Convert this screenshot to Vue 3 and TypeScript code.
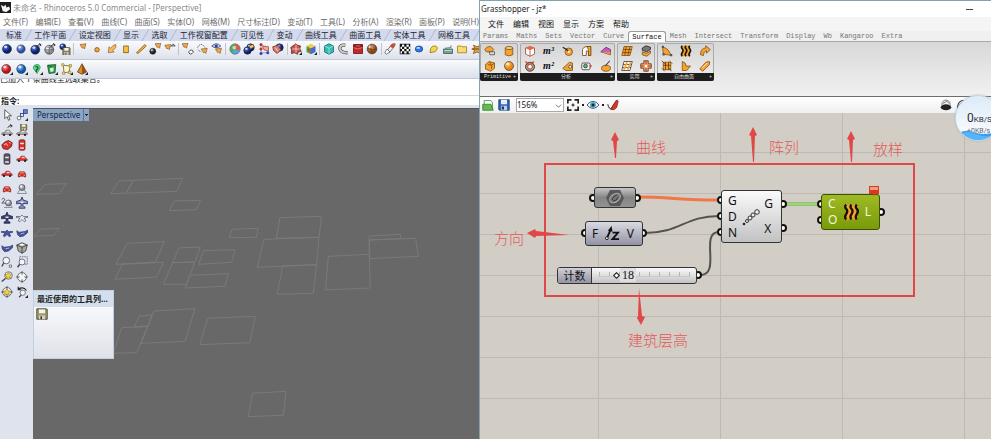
<script setup lang="ts">
import { ref } from 'vue'

const menus = ['文件(F)', '编辑(E)', '查看(V)', '曲线(C)', '曲面(S)', '实体(O)', '网格(M)', '尺寸标注(D)', '变动(T)', '工具(L)', '分析(A)', '渲染(R)', '面板(P)', '说明(H)']
const tabs = ['标准', '工作平面', '设定视图', '显示', '选取', '工作视窗配置', '可见性', '变动', '曲线工具', '曲面工具', '实体工具', '网格工具']
const ghMenus = ['文件', '编辑', '视图', '显示', '方案', '帮助']
const ghTabs = ['Params', 'Maths', 'Sets', 'Vector', 'Curve', 'Surface', 'Mesh', 'Intersect', 'Transform', 'Display', 'Wb', 'Kangaroo', 'Extra']

const ball = (fill: string, x = 8, y = 8, r = 6) =>
  `<circle cx="${x}" cy="${y}" r="${r}" fill="${fill}" stroke="#1b2038" stroke-width=".7"/><ellipse cx="${x - r * 0.3}" cy="${y - r * 0.45}" rx="${r * 0.35}" ry="${r * 0.25}" fill="#fff" opacity=".75"/>`
const pointer = (x: number, y: number) =>
  `<path transform="translate(${x} ${y})" d="M0 1l8-1-2 7-2-2-1 1z" fill="#f4a640" stroke="#6a4312" stroke-width=".7"/>`
const hook = '<path d="M9 5q1-3 5-3m-2-1.500l3 2-2 2" fill="none" stroke="#222" stroke-width="1.200"/>'
const corner = '<path d="M16 12v4h-4z" fill="#222"/>'
const floppy = (x: number, y: number, s: number, c = '#8b8656') =>
  `<g transform="translate(${x} ${y}) scale(${s})"><path d="M0 0h13l1 1v13H0z" fill="${c}" stroke="#34332a"/><path d="M3 1h8v5H3z" fill="#f4f4ee"/><path d="M3 9h8v5H3z" fill="#d2d2ca"/><path d="M5 10h2v4H5z" fill="#333"/></g>`
const carSide = (c: string, y = 0) =>
  `<g transform="translate(0 ${y})"><path d="M1 10V8l4-1 2-3h4l2 3 2 1v2z" fill="${c}" stroke="#701010" stroke-width=".5"/><path d="M7 7l1-2h3l1 2z" fill="#dde"/><circle cx="4" cy="10.500" r="1.500" fill="#222"/><circle cx="12" cy="10.500" r="1.500" fill="#222"/></g>`
const carFront = '<path d="M3 12V8l2-3h6l2 3v4h-2v-1H5v1z" fill="#d92b22" stroke="#5a1010" stroke-width=".6"/><path d="M5 7l1-1h4l1 1z" fill="#f7dcdc"/><path d="M4 9h2v1H4zm6 0h2v1h-2z" fill="#ffe36b"/>'
const carTop = (c: string) =>
  `<rect x="4" y="1" width="8" height="14" rx="2" fill="${c}" stroke="#401012" stroke-width=".8"/><path d="M5 5h6l-1 2H6zm1 6h4l1 2H5z" fill="#e9e9f2"/>`
const lens = '<circle cx="7" cy="6" r="4.500" fill="#f4f6fa" stroke="#555" stroke-width="1.100"/><path d="M4 9l-3 5" stroke="#444" stroke-width="1.800"/>'
const spark = (x: number, y: number) => `<path transform="translate(${x} ${y})" d="M0-4l1.500 2L4-1 2 1l1 3-3-1-3 1V1l-2-2 3-.5z" fill="#f6d32e" stroke="#6d5a10" stroke-width=".6"/>`
const target = '<circle cx="8" cy="8" r="6" fill="#f2f4f8" stroke="#555" stroke-width="1.100"/><path d="M8 0v5m0 6v5M0 8h5m6 0h5" stroke="#444"/>'
const planeThin = (c: string) => `<path d="M0 6h6l2-2 2 2h6v1l-5 1 2 4-2 1-3-3-3 3-2-1 2-4-5-1z" fill="${c}" stroke="#222846" stroke-width=".7"/>`
const planeSide = '<path d="M1 5l3 2 8-1 4-2-1 4-5 4-5 1-3-3z" fill="#4254a8" stroke="#20284f" stroke-width=".8"/><path d="M6 9l5-1" stroke="#cdd4f4"/>'
const planeTop = '<path d="M8 0l1.500 4 6 2v3l-6-.5-.5 3 3 2v1.500H4V13.500l3-2-.5-3-6 .5V6l6-2z" fill="#8d99cc" stroke="#1b2245"/><path d="M6 6h4v2H6z" fill="#e4e8f8"/>'
const O = 'fill="#f5a32c" stroke="#6b3d0a" stroke-width=".9"'

const icons: Record<string, string> = {
  blue: ball('url(#blue)'),
  blue2: ball('url(#blueSoft)', 8, 8, 5.5),
  blueHook: ball('url(#blue)', 7, 9, 6) + hook,
  grayHook: ball('url(#gray)', 7, 9, 6) + '<path d="M1 9h12M7 3v12M3 5q4 3 8 0" stroke="#444" stroke-width=".7" fill="none"/>' + hook,
  ballSave: ball('url(#blue)', 5, 5, 4) + floppy(5, 6, 0.7),
  arrow: pointer(4, 1),
  dot: `<circle cx="8" cy="9" r="3" ${O}/>`,
  arrowIn: '<path d="M13 2l-3 1-4 4-2-2-1 8 8-1-2-2 4-4z" fill="#f5b95e" stroke="#6b3d0a" stroke-width=".7"/>',
  bar: '<rect x="5" y="4" width="6" height="9" fill="#fbc43e" stroke="#6b3d0a" stroke-width=".9"/>',
  pencil: '<path d="M2 13L13 2l2 2L4 14z" fill="#f9b43a" stroke="#6b3d0a" stroke-width=".9"/>',
  bombArrow: ball('url(#dark)', 5, 11, 4) + pointer(8, 0),
  arrowHook: pointer(1, 2) + '<path d="M9 5q1-3 4-3m-1-1l3 3h-5" fill="#ccc" stroke="#444"/>',
  arrowRing: pointer(0, 0) + '<ellipse cx="12" cy="12" rx="3" ry="2.500" fill="#fff" stroke="#333" transform="rotate(-30 12 12)"/>',
  arrowDash: '<path d="M2 6q5-8 10 0M3 9l3 3" stroke="#333" fill="none" stroke-dasharray="2 1"/>' + pointer(7, 7),
  eyeArrow: '<path d="M1 4q6-6 12 0-6 5-12 0" fill="#ccd3ef" stroke="#333a60"/><circle cx="7" cy="4" r="2" fill="#223c9c"/>' + pointer(6, 7),
  rgb: '<circle cx="8" cy="8" r="7" fill="#5aa3d8" stroke="#444" stroke-width=".6"/><path d="M8 1a7 7 0 0 0-4 12l4-5z" fill="#4cb04a"/><path d="M8 1a7 7 0 0 1 6 9L8 8z" fill="#e5593a"/><circle cx="7" cy="6" r="2.500" fill="#fff" opacity=".6"/>',
  ballOrange: ball('url(#blue)', 10, 6, 5) + ball('url(#blue)', 6, 10, 5) + '<path d="M8 4l5-2 2 3-5 3z" fill="#f5c95e" stroke="#6b3d0a" stroke-width=".7"/>',
  redDots: '<path d="M4 2v11M4 3l8 3M4 13h9" stroke="#8888aa"/><path d="M6 4l8 1v6l-6-2z" fill="#f0a9a0" stroke="#b03b30"/><g fill="#c22b2b"><circle cx="4" cy="2" r="2"/><circle cx="4" cy="8" r="2"/></g><g fill="#2845bb"><circle cx="4" cy="14" r="2"/><circle cx="13" cy="13" r="2"/></g>',
  redBlue: ball('url(#blue)', 10, 6, 5) + '<path d="M1 5l7-2 4 6-5 5-5-4z" fill="#d97b64" stroke="#5f2a26"/><path d="M4 6l4 5" stroke="#fff"/>',
  gear: '<path d="M5 3l3-2 2 2 4 1-1 4 2 3-4 1-1 3-4-2-4 1V9L1 6z" fill="#cf5145" stroke="#57201c"/><path d="M3 8h10M8 2v11" stroke="#e7e7e7"/>' + corner,
  cube: '<path d="M2 4l6-3 6 3-6 3z" fill="#f4cf39"/><path d="M2 4v8l6 3V7z" fill="#44a34a"/><path d="M14 4v8l-6 3V7z" fill="#4768d8"/><path d="M4 7l3 1v4l-3-2z" fill="#d94332"/>' + corner,
  gem: '<path d="M8 1l6 3v8l-6 3-6-3V4z" fill="#35bcb4" stroke="#125e60"/><path d="M2 4l6 3 6-3M8 7v8" stroke="#9ceee6" fill="none"/>',
  pipe: '<path d="M11 3Q3 2 4 8q1 5 10 5" fill="none" stroke="#444" stroke-width="4.500"/><path d="M11 3Q3 2 4 8q1 5 10 5" fill="none" stroke="#c9c9c9" stroke-width="2.800"/>',
  redBox: '<path d="M2 2h12v12H2z" fill="#c32824" stroke="#5f0d0d"/><path d="M2 2h12v4H2z" fill="#8f1715"/><path d="M5 4h6M2 6l5 2 7-2" stroke="#f48b83" fill="none"/>',
  brown: ball('url(#brown)', 8, 8, 6.5) + '<path d="M2 7q6 4 12 1M7 2q-2 6 2 12" stroke="#6b3310" fill="none"/>',
  rocket: '<path d="M5 9l5-7q4-2 5-1 0 3-3 6l-5 6z" fill="#eee" stroke="#555"/><path d="M8 5l3-4 4 1-3 5z" fill="#d8442f"/><path d="M4 8l-3 5 2 2 5-3z" fill="#fff" stroke="#555"/>',
  checker: '<path d="M1 1h14v14H1z" fill="#111"/><path d="M4 2h3v3H4zm6 0h3v3h-3zM2 5h2v3H2zm5 0h3v3H7zm6 0h2v3h-2zM4 8h3v3H4zm6 0h3v3h-3zM7 11h3v3H7zm-5 0h2v3H2zm11 0h2v3h-2z" fill="#fff"/>',
  disc: '<ellipse cx="8" cy="8" rx="5" ry="4" fill="#2a78e8" stroke="#174293"/><ellipse cx="7" cy="6.500" rx="2.500" ry="1.300" fill="#bfe0ff"/>',
  bulb: '<path d="M4 13l1-6q2-4 6-3t2 5-5 3z" fill="#f7d748" stroke="#8d6c13"/>',
  tray: '<path d="M2 8h12v6H2z" fill="#71a291" stroke="#315c50"/><path d="M4 7l8-1V3" fill="none" stroke="#555"/><path d="M3 10h10" stroke="#d2efe3"/>',
  folder: '<path d="M2 4h5l1 1h6v8H2z" fill="#f8dc70" stroke="#9a7418"/>',
  bug: `<path d="M3 3l2 3-4 2 4 2-2 4 5-2 5 2-2-4 4-2-4-2 2-3-5 2z" ${O}/><path d="M3 8h9" stroke="#222"/>`,
  redBall: ball('url(#red)', 7, 8, 6) + corner,
  blueBall: ball('url(#azure)', 7, 8, 6) + corner,
  greenBulb: '<path d="M3 7q0-5 5-5t4 5l-4 7z" fill="#58dd88" stroke="#2b8c50"/><path d="M6 5q4-1 3 3l-2 1v3" stroke="#124b2a" stroke-width="1.500" fill="none"/>' + corner,
  greenBox: '<path d="M2 3l11-1-1 11-8 1z" fill="#2e9e4d" stroke="#0f4f23"/><path d="M5 7l5-1v5l-4 1z" fill="#dff5df"/><path d="M3 3l4 2" stroke="#115227"/>' + corner,
  nodes: '<path d="M3 3l9 1-1 8-7 1z" fill="#fff5c5" stroke="#555"/><g fill="#ffe66a" stroke="#8d7415" stroke-width=".8"><path d="M1 1h3v3H1zM11 2h3v3h-3zM10 11h3v3h-3zM2 12h3v3H2z"/></g>' + corner,
  cone: '<path d="M8 1l6 11-6 3-6-3z" fill="#e08b2d" stroke="#613407"/><path d="M8 1v14l6-3z" fill="#9a5315"/>' + corner,
  cursor: '<path d="M5 1v12l3-3 2 5 2-1-2-5h4z" fill="#fff" stroke="#333"/>',
  link: '<path d="M4 12L12 4" stroke="#555" stroke-width="1.500"/><circle cx="4" cy="12" r="2.500" fill="#fff" stroke="#555"/><rect x="10" y="1" width="5" height="5" fill="#6683d8" stroke="#20357c"/><rect x="6" y="6" width="4" height="4" fill="#dfe7ff" stroke="#20357c"/>' + corner,
  carHook: carSide('#9fb09f', 4) + hook,
  carSave: carSide('#9fb09f', 4) + floppy(6, 0, 0.6),
  redBlob: '<path d="M1 8l4-4 5-2 5 3-1 5-5 4-6-1z" fill="#d9302a" stroke="#5f1111"/><path d="M4 8l3-2 2 3m2-5l2 2" stroke="#fff" fill="none"/>',
  carTop: carTop('#e02d25'), carTopDark: carTop('#55566a'),
  car: carSide('#e02d25'), carFront,
  ballTri: ball('url(#gray)', 8, 6, 4) + '<path d="M2 14l3-5m9 5l-3-5M2 14h12" stroke="#777" fill="none"/>',
  ballTwo: '<path d="M1 3q3-3 4 0 0 2-4 5h5" fill="none" stroke="#333"/>' + ball('url(#gray)', 10, 8, 4) + '<path d="M4 14h11l-2-3" stroke="#777" fill="none"/>',
  planeTop, planeDark: planeTop.replace('#8d99cc', '#3b4276'),
  planeLine: planeThin('#e1e4f4'), planeFront: planeThin('#4254a8'), planeSide,
  crate: '<path d="M1 4l7-3 7 3-2 8-5 3-5-3z" fill="#a8a8a0" stroke="#2f2f2b"/><path d="M1 4l7 3 7-3M8 7v8" stroke="#2f2f2b" fill="none"/><path d="M4 4l4-2 4 2-4 1z" fill="#fff"/>',
  zoom: lens + '<path d="M11 12h3v3h-3z" fill="#fff" stroke="#555"/>',
  zoomDot: '<path d="M5 1h10v10H5z" fill="none" stroke="#555" stroke-dasharray="2 1"/><circle cx="8" cy="8" r="4" fill="#f4f6fa" stroke="#555"/><path d="M5 11l-3 4" stroke="#444" stroke-width="1.800"/>',
  zoomSpark: '<circle cx="10" cy="6" r="5" fill="#f4f6fa" stroke="#555"/><path d="M6 10l-5 4" stroke="#444" stroke-width="1.800"/>' + spark(10, 6),
  target, targetSpark: target + spark(8, 8),
  zoomUndo: '<path d="M14 6q-4-6-11-2m0-3v4h4" stroke="#222" fill="none" stroke-width="1.500"/><circle cx="9" cy="9" r="3.500" fill="#f4f6fa" stroke="#555"/><path d="M7 12l-3 3" stroke="#444" stroke-width="1.500"/>' + corner,
  save: floppy(1, 1, 1, '#a09a68'),
  gSurface: `<path d="M1 6q3-5 8-4l4 4-3 3H3z" ${O}/><path d="M7 9h7v4H8z" fill="#ddd" stroke="#444"/>`,
  gCyl: `<path d="M3 4v9q5 3 10 0V4z" ${O}/><ellipse cx="8" cy="4" rx="5" ry="2" fill="#ffd57e" stroke="#6b3d0a"/>`,
  gBox: `<path d="M2 6l5-4 7 2v7l-5 4-7-3z" ${O}/><path d="M5 6l5 1v5M7 2l3 5 4-3" fill="none" stroke="#7a4b10"/>`,
  gBall: ball('url(#orange)', 8, 8, 6),
  gCubeLine: '<path d="M2 4l6-2 6 2v8l-6 3-6-3z" fill="#fff" stroke="#a33b24"/><path d="M2 4l6 3 6-3-6-2z" fill="#e6683e"/><path d="M8 7v8" stroke="#a33b24"/>',
  gOrb: '<circle cx="8" cy="9" r="6" fill="#b98e78" stroke="#33241d"/><circle cx="8" cy="9" r="3" fill="#fff" stroke="#a33b24"/><path d="M2 2l4 4m7-4l-3 3" stroke="#c63a23" stroke-width="1.500"/>',
  gKnot: `<circle cx="9" cy="9" r="5" ${O}/><path d="M1 3l5 3 3 3" stroke="#222" stroke-width="1.500" fill="none"/><circle cx="9" cy="9" r="1.500" fill="#fff"/>`,
  gTilt: `<path d="M1 11l9-8 4 1v10H5z" ${O}/><circle cx="11" cy="9" r="2" fill="#fff" stroke="#333"/>`,
  gFold: `<path d="M2 14V6q1-4 6-4h5v12h-3V8H7v6z" fill="#fff" stroke="#6b3d0a"/><path d="M8 2h5v12h-3V7z" ${O}/>`,
  gTag: '<rect x="1" y="4" width="11" height="9" rx="2" fill="#eee" stroke="#333"/><circle cx="6" cy="8" r="2.500" fill="#6db25a" stroke="#333"/><path d="M12 6l3 2-3 2z" fill="#d33"/>',
  gMag: '<path d="M1 9l7-6 6 3v7z" fill="#c659c0" stroke="#56286a"/><path d="M1 9l13 4V9z" fill="#f48b36"/>',
  gPot: `<ellipse cx="8" cy="11" rx="6" ry="4" ${O}/><path d="M7 8l6-7" stroke="#444" stroke-width="1.500"/>`,
  gGrid: `<path d="M4 2h11l-3 12H1z" ${O}/><path d="M7 2L5 14M12 2L9 14M3 6h11M2 10h11" stroke="#6b3d0a" fill="none"/>`,
  gGrid2: '<path d="M4 2h11l-3 12H1z" fill="#fff" stroke="#333"/><path d="M3 6h11M2 10h11" stroke="#333"/><path d="M4 13L8 3M9 13l4-10" stroke="#f5a32c" stroke-width="2.500"/>',
  gStack: `<path d="M3 4l5-3 6 2v3l-5 3-6-2z" fill="#777" stroke="#222"/><path d="M3 9l6 2 5-3v3l-5 4-6-2z" ${O}/>`,
  gCross: '<path d="M5 1h6v4h4v6h-4v4H5v-4H1V5h4z" fill="#f0a467" stroke="#632b13"/><path d="M8 1v14M1 8h14" stroke="#8a2f14"/><circle cx="8" cy="8" r="2" fill="#fff"/>',
  gTri: `<path d="M2 2l7 4 5 8-11-2z" ${O}/><path d="M1 1h3v3H1zm11 11h3v3h-3zM2 11h3v3H2z" fill="#555"/>`,
  loft: '<path d="M3 1q-2 2 0 4t0 5 0 5h10q2-2 0-5t0-5 0-4z" fill="#f5a32c"/><path d="M3 1q-2 2 0 4t0 5 0 5M8 1q-2 2 0 4t0 5 0 5M13 1q-2 2 0 4t0 5 0 5" fill="none" stroke="#17120a" stroke-width="2.200"/>',
  gBend: `<path d="M2 13q0-9 7-9V1l6 5-5 5V8q-4 0-4 6z" ${O}/>`,
  gPatch: `<path d="M3 3h10v10H3z" ${O}/><path d="M1 1l4 4m6-4l4 4M1 11l4 4m6-4l3 4M6 3v10M10 3v10M3 7h10" stroke="#553009"/>`,
  gSheet: `<path d="M3 2q5 1 5 6h6l-5 6H3z" ${O}/>`,
  gPipe: `<path d="M1 12L9 3l5-1v4l-9 9z" ${O}/><path d="M4 11l7-7" stroke="#fff"/>`,
  open: '<path d="M3 2h9l2 3v8H3z" fill="#fff" stroke="#3c8a35"/><path d="M1 7h11l3 8H1z" fill="#61bb4e" stroke="#2c7a28"/>',
  ghSave: '<path d="M1 1h14v14H2l-1-1z" fill="#2f65b8" stroke="#173866"/><path d="M4 1h8v6H4z" fill="#e6effb"/><path d="M4 9h8v6H4z" fill="#b8cce8"/><path d="M5 10h3v4H5z" fill="#173866"/>',
  frame: '<path d="M1 6V1h5M10 1h5v5M15 10v5h-5M6 15H1v-5" fill="none" stroke="#222" stroke-width="2.500"/><path d="M8 6v4M6 8h4" stroke="#222" stroke-width="1.500"/>',
  eye: '<path d="M0 8q8-10 16 0-8 9-16 0z" fill="#fff" stroke="#224d66" stroke-width="1.200"/><circle cx="8" cy="8" r="4" fill="#57a5c6"/><circle cx="8" cy="8" r="2" fill="#102d40"/>',
  paint: '<path d="M1 7q2 8 5 5L14 1" fill="none" stroke="#222" stroke-width="1.300"/><path d="M5 14q5 2 8-3l2-8-3-1-5 8z" fill="#d43a2a" stroke="#6b140c" stroke-width=".8"/>',
  globe: '<circle cx="8" cy="7" r="5.500" fill="#f4f4f4" stroke="#555"/><path d="M4 6l5-3 3 3" stroke="#555" fill="none"/><ellipse cx="8" cy="11" rx="7" ry="4" fill="#222"/>',
  globeHalf: '<path d="M2 13q0-9 6-11l5 1" fill="#f4f4f4" stroke="#333" stroke-width="1.500"/><path d="M3 9l5-5m0 5l3-5" stroke="#555"/>'
}

const mainBar = [
  ['blue', 'blue2', 'blueHook', 'grayHook', 'ballSave'],
  ['arrow', 'dot', 'arrowIn', 'bar', 'pencil', 'bombArrow', 'arrowHook'],
  ['arrowRing', 'arrowDash', 'eyeArrow'],
  ['rgb', 'ballOrange', 'redDots', 'redBlue'],
  ['gear', 'cube'],
  ['gem', 'pipe', 'redBox', 'brown'],
  ['rocket', 'checker', 'disc', 'bulb', 'tray', 'folder', 'bug']
]
const secondBar = ['redBall', 'blueBall', 'greenBulb', 'greenBox', 'nodes', 'cone']
const sideBar = ['cursor', 'link', 'carHook', 'carSave', 'redBlob', 'carTop', 'carTopDark', 'car', 'car', 'carFront', 'carFront', 'ballTri', 'ballTwo', 'planeTop', 'planeDark', 'planeLine', 'planeFront', 'planeSide', 'planeSide', 'crate', 'zoom', 'zoomDot', 'zoomSpark', 'target', 'targetSpark', 'zoomUndo']
const panels = [
  { name: 'Primitive', cols: 2, items: ['gSurface', 'gCyl', 'gBox', 'gBall'] },
  { name: '分析', cols: 5, items: ['gCubeLine', 'm³', 'gKnot', 'gFold', 'gMag', 'gOrb', 'm²', 'gTilt', 'gTag', 'gPot'] },
  { name: '实用', cols: 2, items: ['gGrid', 'gStack', 'gGrid2', 'gCross'] },
  { name: '自由曲面', cols: 3, items: ['gTri', 'loft', 'gBend', 'gPatch', 'gSheet', 'gPipe'] }
]

/* Building outlines in the perspective view, at three units per pixel. */
const outlines = [
  '20,100 45,70 109,68 88,98', '242,98 267,60 458,52 440,91', '310,60 288,96', '418,149 432,120 512,118 499,146',
  '12,226 30,205 88,202 72,223', '598,230 606,205 684,202 680,229', '258,310 292,247 403,242 376,303',
  '255,355 277,310 401,304 380,348', '400,370 447,261 511,258 470,370', '427,305 492,303',
  '506,310 520,269 615,266 605,304', '465,381 480,343 596,338 585,376', '313,497 328,465 366,462 353,495',
  '333,547 372,450 495,443 465,541', '250,577 275,500 353,497 320,575', '510,551 533,472 676,466 660,545',
  '739,232 750,170 875,166 867,229', '682,319 702,235 867,229 860,311', '742,400 758,315 860,311 850,397',
  '887,387 895,286 1018,280 1021,381', '1018,225 1112,220 1112,233 1018,237', '1018,237 1157,232 1165,286 1020,293',
  '1018,237 1018,280', '655,767 668,697 768,691 760,763'
]
const ports = [[113, 85], [157, 85], [105, 120], [163, 120], [218, 162], [241, 87], [241, 103], [241, 119], [303, 91], [303, 115], [341, 91], [341, 107], [401, 99]]

const activeTab = ref('Surface')
const zoomLevel = ref('156%')
const count = ref(18)
</script>

<template>
  <svg class="defs" aria-hidden="true">
    <defs>
      <radialGradient id="blue" cx=".35" cy=".3"><stop offset="0" stop-color="#7fa8f5" /><stop offset=".5" stop-color="#2a4fb4" /><stop offset="1" stop-color="#101f63" /></radialGradient>
      <radialGradient id="blueSoft" cx=".35" cy=".3"><stop offset="0" stop-color="#a8c3fa" /><stop offset="1" stop-color="#2c4fb0" /></radialGradient>
      <radialGradient id="azure" cx=".35" cy=".3"><stop offset="0" stop-color="#a5d6ff" /><stop offset="1" stop-color="#0e55ad" /></radialGradient>
      <radialGradient id="red" cx=".35" cy=".3"><stop offset="0" stop-color="#ff9a94" /><stop offset="1" stop-color="#c20f14" /></radialGradient>
      <radialGradient id="gray" cx=".35" cy=".3"><stop offset="0" stop-color="#ffffff" /><stop offset="1" stop-color="#8d8d8d" /></radialGradient>
      <radialGradient id="dark" cx=".35" cy=".3"><stop offset="0" stop-color="#888888" /><stop offset="1" stop-color="#1c1c1c" /></radialGradient>
      <radialGradient id="brown" cx=".35" cy=".3"><stop offset="0" stop-color="#efae6c" /><stop offset="1" stop-color="#8c4a1a" /></radialGradient>
      <radialGradient id="orange" cx=".35" cy=".3"><stop offset="0" stop-color="#ffd071" /><stop offset="1" stop-color="#e88410" /></radialGradient>
    </defs>
  </svg>
  <main class="desktop">
    <section class="rhino">
      <header class="title">
        <svg class="logo" viewBox="0 0 12 12"><path d="M0 0h12v12H0z" fill="#1d1d1d" /><path d="M1 3l3 2 2-2 1 3 3-1 1 3-4 3-4-1z" fill="#f4f4f4" /></svg>
        <span>未命名 - Rhinoceros 5.0 Commercial - [Perspective]</span>
      </header>
      <nav class="menu"><a v-for="m in menus" :key="m" href="#">{{ m }}</a></nav>
      <nav class="tabs"><button v-for="t in tabs" :key="t">{{ t }}</button></nav>
      <div class="bar main-bar">
        <template v-for="(group, g) in mainBar" :key="g">
          <i v-if="g" class="sep"></i>
          <button v-for="name in group" :key="name" class="tool" :aria-label="name"><svg viewBox="0 0 16 16" v-html="icons[name]"></svg></button>
        </template>
      </div>
      <div class="bar second-bar">
        <button v-for="name in secondBar" :key="name" class="tool" :aria-label="name"><svg viewBox="0 0 16 16" v-html="icons[name]"></svg></button>
      </div>
      <div class="history"><p>已加入 1 条曲线至选取集合。</p></div>
      <div class="command"><label for="cmd">指令:</label><input id="cmd" type="text" /></div>
      <div class="work">
        <aside class="side">
          <button v-for="(name, i) in sideBar" :key="i" class="tool" :aria-label="name"><svg viewBox="0 0 16 16" v-html="icons[name]"></svg></button>
        </aside>
        <div class="view">
          <svg class="outlines" aria-hidden="true">
            <g transform="translate(-3 52) scale(.3333)"><polygon v-for="p in outlines" :key="p" :points="p" /></g>
          </svg>
          <button class="view-name"><span>Perspective</span><i></i></button>
          <div class="recent">
            <h2>最近使用的工具列...</h2>
            <button class="tool" aria-label="save"><svg viewBox="0 0 16 16" v-html="icons.save"></svg></button>
          </div>
        </div>
      </div>
    </section>

    <section class="gh">
      <header class="gh-title"><span>Grasshopper - jz*</span><button aria-label="minimize"></button></header>
      <nav class="gh-menu"><a v-for="m in ghMenus" :key="m" href="#">{{ m }}</a></nav>
      <nav class="gh-tabs"><button v-for="t in ghTabs" :key="t" :class="{ active: t === activeTab }" @click="activeTab = t">{{ t }}</button></nav>
      <div class="ribbon">
        <div v-for="p in panels" :key="p.name" class="panel">
          <div class="panel-grid" :style="{ '--cols': p.cols }">
            <button v-for="name in p.items" :key="name" class="comp" :aria-label="name">
              <svg v-if="icons[name]" viewBox="0 0 16 16" v-html="icons[name]"></svg>
              <b v-else>{{ name }}</b>
            </button>
          </div>
          <div class="panel-name"><span>{{ p.name }}</span><i>+</i></div>
        </div>
      </div>
      <div class="gh-bar">
        <button class="tool" aria-label="open"><svg viewBox="0 0 16 16" v-html="icons.open"></svg></button>
        <button class="tool" aria-label="save"><svg viewBox="0 0 16 16" v-html="icons.ghSave"></svg></button>
        <span class="combo">
          <select v-model="zoomLevel" aria-label="zoom"><option>156%</option><option>100%</option></select>
          <svg viewBox="0 0 8 8"><path d="M1 3l3 3 3-3" fill="none" stroke="#666" /></svg>
        </span>
        <button class="tool" aria-label="extents"><svg viewBox="0 0 16 16" v-html="icons.frame"></svg></button>
        <i class="drop"></i>
        <button class="tool" aria-label="preview"><svg viewBox="0 0 16 16" v-html="icons.eye"></svg></button>
        <i class="drop"></i>
        <button class="tool" aria-label="sketch"><svg viewBox="0 0 16 16" v-html="icons.paint"></svg></button>
        <span class="spring"></span>
        <button class="tool" aria-label="shaded"><svg viewBox="0 0 16 16" v-html="icons.globe"></svg></button>
        <button class="tool" aria-label="wire"><svg viewBox="0 0 16 16" v-html="icons.globeHalf"></svg></button>
      </div>
      <div class="canvas">
        <svg class="wires" aria-hidden="true">
          <g fill="none" stroke-width="2">
            <path d="M158 84C190 84 200 87 239 87" stroke="#f3764a" stroke-width="3" />
            <path d="M165 120C200 120 205 103 239 103" stroke="#55534f" />
            <path d="M220 162C242 162 219 119 239 119" stroke="#55534f" />
            <path d="M305 91H340" stroke="#8fc36c" stroke-width="4" />
            <path d="M305 91H340" stroke="#b5dc97" stroke-width="1" />
            <path d="M65 51H434V183H65z" stroke="#e04848" />
          </g>
          <g fill="#e04848">
            <path d="M135 19l4 8-2 1-1 17h-1l-2-17-2-1z" />
            <path d="M273 14l4 8-2 1-1 26h-1l-2-26-2-1z" />
            <path d="M371 18l4 8-2 1-1 22h-1l-2-22-2-1z" />
            <path d="M47 120l8-4 1 2 33 4-33 1-1 2z" />
            <path d="M161 212l-4-7 1-2 1-28 3 28 3 1z" />
          </g>
          <g fill="#fff" stroke="#111" stroke-width="2"><circle v-for="(p, i) in ports" :key="i" :cx="p[0]" :cy="p[1]" r="3" /></g>
        </svg>

        <span class="note n-curve">曲线</span>
        <span class="note n-array">阵列</span>
        <span class="note n-loft">放样</span>
        <span class="note n-dir">方向</span>
        <span class="note n-height">建筑层高</span>

        <div class="node curve">
          <svg viewBox="0 0 20 18"><path d="M5 1h10l4 8-4 8H5L1 9z" fill="#585858" /><ellipse cx="10" cy="9" rx="6" ry="4" transform="rotate(-35 10 9)" fill="#777" stroke="#aaa" /><path d="M7 11q1-4 5-5m-4 6q4 0 5-4" fill="none" stroke="#3d3d3d" /></svg>
        </div>
        <div class="node vector">
          <span>F</span>
          <svg viewBox="0 0 16 16"><path d="M2 13L6 4" stroke="#111" stroke-width="2" /><path d="M7 0L3 5l5 1z" fill="#111" /><circle cx="2" cy="13" r="1.500" fill="#fff" stroke="#111" /><path d="M8 7h6l-6 7h7" fill="none" stroke="#111" stroke-width="2" /></svg>
          <span>V</span>
        </div>
        <div class="node array">
          <div class="pins"><span>G</span><span>D</span><span>N</span></div>
          <svg viewBox="0 0 18 18"><g fill="#eee" stroke="#333"><circle cx="5" cy="13" r="1.500" /><circle cx="8" cy="10" r="2" /><circle cx="11" cy="7" r="2" /><circle cx="15" cy="4" r="2.300" /></g><circle cx="2" cy="16" r="1.300" fill="#222" /></svg>
          <div class="pins out"><span>G</span><span>X</span></div>
        </div>
        <div class="node loft">
          <div class="pins"><span>C</span><span>O</span></div>
          <svg viewBox="0 0 16 16" v-html="icons.loft"></svg>
          <span>L</span>
          <svg class="warn" viewBox="0 0 10 10"><path d="M0 0h10v8H7L5 10 4 8H0z" fill="#d8391f" /><path d="M1 1h8v3H1z" fill="#f59a80" /></svg>
        </div>
        <div class="node slider">
          <label for="count">计数</label>
          <div class="track">
            <input id="count" v-model.number="count" type="range" min="0" max="100" />
            <output for="count">{{ count }}</output>
          </div>
        </div>
      </div>

      <div class="speed">
        <p><b>0</b>KB/S</p>
        <small>+0KB/s</small>
        <svg viewBox="0 0 46 12" aria-hidden="true"><path d="M0 3q8-4 18 0t28-1v10H0z" fill="#3b9df2" /><path d="M0 5q10-5 20 0t26 0v7H0z" fill="#58b4fa" /></svg>
      </div>
    </section>
  </main>
</template>

<style>
body { background: #d3cec5; }
</style>

<style scoped>
.defs { position: absolute; width: 0; height: 0; }
.desktop, .desktop * { box-sizing: border-box; }
.desktop {
  display: grid;
  grid-template-columns: 479fr 512fr;
  min-height: 100vh;
  overflow: hidden;
  font: 8px/12px "Noto Sans", "Noto Sans CJK SC", sans-serif;
  color: #222;
}
button { padding: 0; border: 0; background: none; font: inherit; color: inherit; }
a { color: inherit; text-decoration: none; }
p, h2 { margin: 0; }
svg { display: block; }
.tool { display: grid; place-items: center; flex: none; width: 14px; height: 14px; }
.tool svg { width: 12px; height: 12px; }

.rhino { display: flex; flex-direction: column; min-width: 0; overflow: hidden; background: #fff; }
.title { display: flex; align-items: center; gap: 2px; height: 15px; color: #8a8a8a; white-space: nowrap; }
.logo { width: 11px; height: 11px; }
.menu { display: flex; justify-content: space-between; align-items: center; height: 14px; padding-left: 3px; color: #6c6c6c; white-space: nowrap; }
.tabs { display: flex; justify-content: space-between; height: 12px; padding: 0 9px 0 6px; background: #d4daee; color: #20242c; white-space: nowrap; }
.tabs button { position: relative; }
.tabs button::after { content: ""; position: absolute; right: -7px; top: 0; width: 1px; height: 12px; background: #b0b8d0; transform: skewX(-30deg); }
.bar { display: flex; align-items: center; border-bottom: 1px solid #c3c8d4; background: linear-gradient(#f9fafc, #dde1eb); }
.main-bar { justify-content: space-between; height: 19px; margin-right: -5px; padding-bottom: 3px; }
.sep { width: 1px; height: 12px; margin: 0 1px; background: #bfc4cf; }
.second-bar { height: 19px; gap: 1px; }
.history { height: 16px; overflow: hidden; color: #111; }
.history p { margin-top: -6px; }
.command { display: flex; align-items: center; height: 10px; border-top: 1px solid #d4d6dc; font-weight: 700; }
.command label { padding-left: 1px; }
.command input { flex: 1; min-width: 0; height: 9px; padding: 0 2px; border: 0; outline: 0; background: none; font: inherit; }
.work { display: flex; flex: 1; border-top: 3px solid #dfe2ec; background: #dfe3ee; }
.side { display: grid; grid-template: repeat(13, 1fr) / 15px 15px; flex: none; width: 33px; height: 191px; align-items: center; }
.view { position: relative; flex: 1; min-width: 0; border-top: 1px solid #4f5560; background: #686868; }
.outlines { position: absolute; inset: 0; width: 100%; height: 100%; }
.outlines polygon { fill: none; stroke: #797979; stroke-width: 3; }
.view-name { position: relative; display: flex; align-items: stretch; gap: 3px; width: max-content; height: 12px; padding-left: 4px; background: #8aa4c3; color: #15253c; }
.view-name i { width: 6px; border-left: 1px solid #5c7596; background: conic-gradient(from -40deg at 50% 8px, #15253c 80deg, transparent 0) 0 0 / 5px 8px no-repeat; clip-path: none; }
.view-name i { background: linear-gradient(#15253c, #15253c) 1px 5px / 3px 1px no-repeat, linear-gradient(#15253c, #15253c) 2px 6px / 1px 1px no-repeat; }
.recent { position: absolute; left: 0; top: 181px; width: 81px; height: 69px; border: 1px solid #c5cedb; background: linear-gradient(#fff, #dfe2ea); }
.recent h2 { height: 16px; padding-left: 3px; background: #d3dfec; font: 700 8px/15px "Noto Sans", "Noto Sans CJK SC", sans-serif; white-space: nowrap; overflow: hidden; }
.recent .tool { margin: 0 1px; }

.gh { position: relative; display: flex; flex-direction: column; min-width: 0; border-top: 1px solid #7fa3b0; border-left: 1px solid #7fa3b0; background: #f0f0f0; }
.gh-title { display: flex; justify-content: space-between; align-items: center; height: 16px; padding: 0 18px 0 1px; background: #fff; }
.gh-title button { width: 7px; height: 12px; background: linear-gradient(#444, #444) center / 7px 1px no-repeat; }
.gh-menu { display: flex; gap: 9px; align-items: center; height: 14px; padding-left: 8px; background: #f5f5f5; color: #111; }
.gh-tabs { display: flex; gap: 8px; height: 11px; padding-left: 3px; border-bottom: 1px solid #aaa; color: #777; font: 7px/10px "Liberation Mono", monospace; }
.gh-tabs .active { height: 11px; margin: 0 -4px; padding: 0 3px; border: 1px solid #999; border-bottom: 0; border-radius: 3px 3px 0 0; background: #fff; color: #111; }
.ribbon { display: flex; align-items: flex-start; gap: 2px; height: 55px; padding-top: 1px; border-bottom: 1px solid #6d6d6d; background: linear-gradient(#d8d8d8, #f1f1f1); }
.panel { overflow: hidden; border-radius: 2px; box-shadow: inset 0 0 0 1px #aaa; background: linear-gradient(#d4d4d4, #efefef); }
.panel-grid { display: grid; grid-template-columns: repeat(var(--cols), 19px); grid-auto-rows: 15px; }
.comp { display: grid; place-items: center; }
.comp svg { width: 12px; height: 12px; }
.comp b { font: italic 700 10px/12px "Liberation Serif", serif; color: #111; }
.panel-name { display: flex; height: 8px; padding: 0 2px; background: #1d1d1d; color: #ddd; font: 5px/8px "Liberation Mono", "Noto Sans CJK SC", monospace; }
.panel-name span { flex: 1; text-align: center; }
.panel-name i { font-style: normal; }
.gh-bar { display: flex; align-items: center; gap: 2px; height: 16px; padding: 0 22px 0 1px; background: linear-gradient(#fff, #efefef); }
.combo { position: relative; width: 48px; height: 14px; margin-left: 3px; }
.combo select { appearance: none; display: block; width: 100%; height: 100%; padding: 0; border: 1px solid #a9a9a9; border-radius: 0; background: #fff; font: inherit; color: #222; }
.combo svg { position: absolute; right: 2px; top: 4px; width: 7px; height: 7px; pointer-events: none; }
.drop { width: 2px; height: 2px; background: #222; }
.spring { flex: 1; }

.canvas {
  position: relative;
  flex: 1;
  overflow: hidden;
  background:
    repeating-linear-gradient(90deg, #bebab3 0 1px, transparent 1px 122px) 118px 0 / 122px 100%,
    repeating-linear-gradient(#bebab3 0 1px, transparent 1px 41px) 0 39px / 100% 41px,
    #d3cec5;
}
.wires { position: absolute; inset: 0; width: 100%; height: 100%; }
.note { position: absolute; font: 300 15px/20px "Noto Sans CJK SC", sans-serif; color: #e25a5a; white-space: nowrap; }
.n-curve { left: 156px; top: 24px; }
.n-array { left: 289px; top: 24px; }
.n-loft { left: 393px; top: 26px; }
.n-dir { left: 14px; top: 115px; }
.n-height { left: 148px; top: 217px; }
.node { position: absolute; display: flex; align-items: center; justify-content: space-between; border: 1px solid #333; border-radius: 3px; background: linear-gradient(#fafafa, #c2c2c2); font-size: 12px; line-height: 16px; color: #111; }
.curve { left: 114px; top: 74px; width: 42px; height: 21px; justify-content: center; background: linear-gradient(#c5c5c5, #858585 50%, #929292); }
.curve svg { width: 20px; height: 18px; }
.vector { left: 105px; top: 108px; width: 58px; height: 25px; padding: 0 8px 0 6px; background: linear-gradient(#dadae4, #9292a4); }
.vector svg { width: 15px; height: 15px; }
.array { left: 241px; top: 77px; width: 61px; height: 53px; padding: 0 8px 0 6px; }
.array > svg { width: 18px; height: 18px; }
.pins { display: flex; flex-direction: column; }
.pins.out { gap: 9px; }
.loft { left: 341px; top: 81px; width: 59px; height: 36px; padding: 0 8px 0 6px; background: linear-gradient(#9fba25, #7a9a08); border-color: #3e4f08; color: #f3f7df; }
.loft > svg { width: 17px; height: 18px; }
.loft > .warn { position: absolute; right: 0; top: -9px; width: 10px; height: 10px; }
.slider { left: 77px; top: 154px; width: 140px; height: 17px; overflow: hidden; }
.slider label { width: 34px; height: 15px; border-right: 1px solid #333; background: linear-gradient(#d0d0da, #9494a2); font: 11px/14px "Noto Sans CJK SC", sans-serif; text-align: center; }
.track { position: relative; flex: 1; height: 15px; padding: 0 6px; }
.track input { appearance: none; display: block; width: 100%; height: 15px; margin: 0; background: repeating-linear-gradient(90deg, #b4b4b4 0 1px, transparent 1px 10px) 1px 4px / 100% 4px no-repeat, linear-gradient(#c9c9c9, #c9c9c9) 0 8px / 100% 1px no-repeat; }
.track input::-webkit-slider-thumb { appearance: none; width: 5px; height: 5px; border: 1px solid #111; background: #fff; transform: rotate(45deg); }
.track output { position: absolute; left: 28px; top: 0; padding: 0 2px; background: #dfdfdf; font: 12px/14px "Liberation Serif", serif; }

.speed { position: absolute; right: -10px; top: 94px; width: 46px; height: 46px; overflow: hidden; padding: 15px 0 0 11px; border: 1px solid #c6d6e4; border-radius: 50%; background: linear-gradient(#dcebf7, #fbfdff); color: #2a2d33; font-family: Roboto, sans-serif; white-space: nowrap; box-shadow: 0 0 2px #9ab; }
.speed p { line-height: 14px; }
.speed b { font-size: 12px; font-weight: 400; }
.speed small { display: block; font-size: 7px; line-height: 9px; color: #666; }
.speed svg { position: absolute; left: 0; bottom: 0; width: 46px; height: 10px; }
</style>
